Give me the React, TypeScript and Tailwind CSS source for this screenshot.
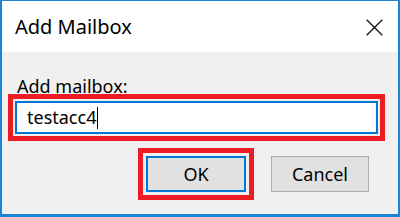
export default function App() {
  return (
    <div className="w-[400px] h-[217px] bg-[#f0f0f0] border-[#1a84d8] border-l-2 border-r-2 border-t border-b-[3px] flex flex-col" style={{ fontFamily: '"Noto Sans", "Open Sans", sans-serif' }}>
      <div className="h-[51px] bg-white flex items-center justify-between pl-[13px] pr-[15px]">
        <span className="text-[20px] text-black leading-none mt-[1px]">Add Mailbox</span>
        <svg width="17" height="17" viewBox="0 0 17 17" className="mt-[1px]">
          <path d="M0.7 0.7 L16.3 16.3 M16.3 0.7 L0.7 16.3" stroke="#111" strokeWidth="1.3" fill="none" />
        </svg>
      </div>
      <div className="flex flex-col pl-[13px] pr-[20px]">
        <div className="mt-[22px] pl-[2px] text-[18px] leading-[24px] text-black">Add mailbox:</div>
        <div className="mt-[3px] h-[33px] bg-white border-2 border-[#0078d7] outline-[5px] outline-solid outline-[#ed1c24] outline-offset-2 flex items-center pl-[10px] text-[18px] text-black">
          <span>testacc4</span>
          <span className="w-px h-[22px] bg-black ml-[1px]" />
        </div>
        <div className="flex justify-end gap-[25px] mt-[22px] pr-[9px]">
          <button className="w-[100px] h-[36px] bg-[#e1e1e1] border-2 border-[#0078d7] outline-[5px] outline-solid outline-[#ed1c24] outline-offset-[3px] text-[18px] text-black flex items-center justify-center">OK</button>
          <button className="w-[98px] h-[36px] bg-[#e1e1e1] border border-[#adadad] text-[18px] text-black flex items-center justify-center">Cancel</button>
        </div>
      </div>
    </div>
  );
}
